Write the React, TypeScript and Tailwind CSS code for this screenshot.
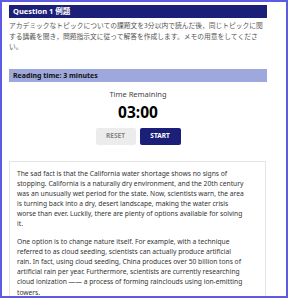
import React from 'react';

const passage = [
  'The sad fact is that the California water shortage shows no signs of stopping. California is a naturally dry environment, and the 20th century was an unusually wet period for the state. Now, scientists warn, the area is turning back into a dry, desert landscape, making the water crisis worse than ever. Luckily, there are plenty of options available for solving it.',
  'One option is to change nature itself. For example, with a technique referred to as cloud seeding, scientists can actually produce artificial rain. In fact, using cloud seeding, China produces over 50 billion tons of artificial rain per year. Furthermore, scientists are currently researching cloud ionization —— a process of forming rainclouds using ion-emitting towers.',
];

const App: React.FC = () => {
  return (
    <div className="w-[288px] h-[298px] border-2 border-[#5b5be3] bg-white overflow-hidden font-['Noto_Sans','Noto_Sans_CJK_JP',sans-serif]">
      <div className="w-[258px] ml-[7px] pt-[3px]">
        {/* Question header */}
        <div className="h-[13px] bg-[#1b1f78] text-white font-bold text-[7.5px] leading-[13px] pl-[4px]">
          Question 1 例題
        </div>
        <p className="mt-[2px] text-[6.78px] leading-[10.5px] text-[#555] font-['Noto_Sans_CJK_JP',sans-serif]">
          アカデミックなトピックについての課題文を3分以内で読んだ後，同じトピックに関する講義を聞き，問題指示文に従って解答を作成します。メモの用意をしてください。
        </p>

        {/* Reading time */}
        <div className="mt-[17px] h-[13px] bg-[#9ea8dc] text-[#111] font-bold text-[7px] leading-[13px] pl-[4px]">
          Reading time: 3 minutes
        </div>

        {/* Timer */}
        <div className="flex flex-col items-center">
          <div className="mt-[7px] text-[7.5px] leading-[10px] text-[#444]">Time Remaining</div>
          <div className="mt-[4px] text-[15.5px] leading-[18px] font-bold text-black">03:00</div>
          <div className="mt-[7px] flex gap-[4px]">
            <button className="w-[40px] h-[17px] rounded-[2px] bg-[#ececec] text-[#888] text-[6.5px] font-bold">
              RESET
            </button>
            <button className="w-[41px] h-[17px] rounded-[2px] bg-[#1b1f78] text-white text-[6.5px] font-bold">
              START
            </button>
          </div>
        </div>

        {/* Passage */}
        <div className="mt-[16px] w-[257px] border border-[#e4e4e4] pl-[7px] pr-[20px] pt-[7px] pb-3 text-[#333] text-[6.7px] leading-[10.1px]">
          {passage.map((p, i) => (
            <p key={i} className={i > 0 ? 'mt-[8px]' : ''}>
              {p}
            </p>
          ))}
        </div>
      </div>
    </div>
  );
};

export default App;
